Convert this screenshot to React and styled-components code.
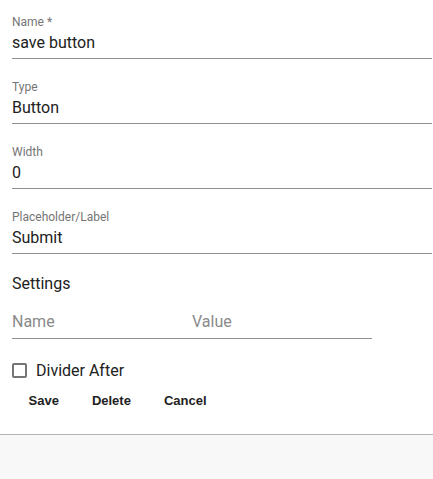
import React from "react";
import styled, { createGlobalStyle } from "styled-components";

const GlobalStyle = createGlobalStyle`
  html, body {
    margin: 0;
    padding: 0;
    background: #f8f8f8;
  }
  body {
    font-family: Roboto, "Liberation Sans", Arial, sans-serif;
    -webkit-font-smoothing: antialiased;
  }
  * { box-sizing: border-box; }
`;

const Panel = styled.div`
  background: #ffffff;
  padding: 0 1px 16px 12px;
  border-bottom: 1px solid #b4b4b4;
  height: 435px;
  display: flex;
  flex-direction: column;
`;

const Fields = styled.div`
  display: flex;
  flex-direction: column;
  gap: 6px;
`;

const Field = styled.label`
  display: flex;
  flex-direction: column;
  padding-top: 16px;
`;

const FieldLabel = styled.span`
  font-size: 12px;
  line-height: 12px;
  color: #757575;
`;

const Input = styled.input`
  font-family: Roboto, "Liberation Sans", Arial, sans-serif;
  font-size: 16px;
  line-height: 19px;
  height: 31px;
  padding: 5px 0 6px;
  margin: 0;
  border: none;
  border-bottom: 1px solid #8f8f8f;
  border-radius: 0;
  outline: none;
  color: #212121;
  background: transparent;
  width: ${(p) => p.$width || "100%"};

  &::placeholder {
    color: #8a8a8a;
    opacity: 1;
  }
`;

const SectionTitle = styled.div`
  margin-top: 20px;
  font-size: 16px;
  line-height: 19px;
  color: #212121;
`;

const SettingsRow = styled.div`
  display: flex;
  margin-top: 19px;
`;

const SettingInput = styled(Input)`
  height: 27px;
  padding: 0 0 7px;
`;

const CheckRow = styled.label`
  display: flex;
  align-items: center;
  gap: 9px;
  margin-top: 19px;
  height: 25px;
  font-size: 16px;
  line-height: 19px;
  color: #212121;
`;

const Box = styled.span`
  width: 15px;
  height: 15px;
  border: 2px solid #757575;
  border-radius: 2px;
  display: inline-block;
`;

const Actions = styled.div`
  display: flex;
  height: 34px;
  align-items: center;
`;

const ActionButton = styled.button`
  font-family: "Liberation Sans", Arial, Helvetica, sans-serif;
  font-weight: 700;
  font-size: 13px;
  color: #212121;
  background: transparent;
  border: none;
  padding: 0 16.5px;
  height: 34px;
  cursor: pointer;
`;

const fields = [
  { label: "Name *", value: "save button" },
  { label: "Type", value: "Button" },
  { label: "Width", value: "0" },
  { label: "Placeholder/Label", value: "Submit" },
];

export default function App() {
  return (
    <>
      <GlobalStyle />
      <Panel>
        <Fields>
          {fields.map((f) => (
            <Field key={f.label}>
              <FieldLabel>{f.label}</FieldLabel>
              <Input defaultValue={f.value} readOnly />
            </Field>
          ))}
        </Fields>
        <SectionTitle>Settings</SectionTitle>
        <SettingsRow>
          <SettingInput $width="180px" placeholder="Name" readOnly />
          <SettingInput $width="180px" placeholder="Value" readOnly />
        </SettingsRow>
        <CheckRow>
          <Box />
          Divider After
        </CheckRow>
        <Actions>
          <ActionButton>Save</ActionButton>
          <ActionButton>Delete</ActionButton>
          <ActionButton>Cancel</ActionButton>
        </Actions>
      </Panel>
    </>
  );
}
